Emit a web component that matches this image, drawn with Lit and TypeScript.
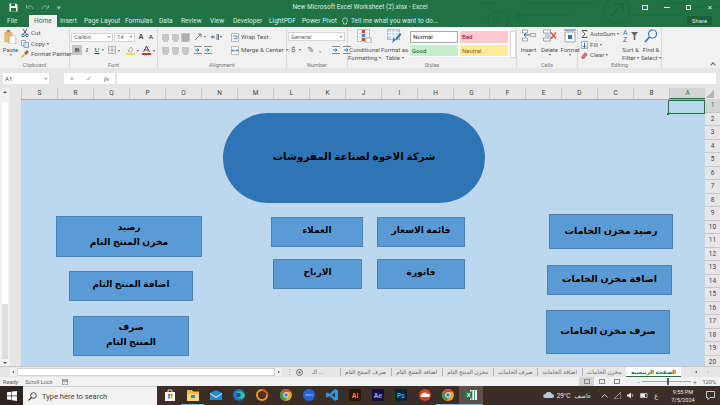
import { LitElement, html, css, nothing } from "lit";
import { customElement } from "lit/decorators.js";

interface Shape {
  x: number;
  y: number;
  w: number;
  h: number;
  size: number;
  lines: string[];
  pill?: boolean;
}

// page coordinates, sheet starts at 21,99
const SHAPES: Shape[] = [
  { x: 223, y: 112, w: 262, h: 90, size: 10.3, lines: ["شركة الاخوة لصناعة المفروشات"], pill: true },
  { x: 56, y: 215, w: 146, h: 41, size: 9.2, lines: ["رصيد", "مخزن المنتج التام"] },
  { x: 69, y: 270, w: 124, h: 30, size: 8.9, lines: ["اضافة المنتج التام"] },
  { x: 73, y: 315, w: 116, h: 40, size: 9.2, lines: ["صرف", "المنتج التام"] },
  { x: 271, y: 216, w: 92, h: 30, size: 9, lines: ["العملاء"] },
  { x: 377, y: 216, w: 88, h: 30, size: 9, lines: ["قائمة الاسعار"] },
  { x: 273, y: 258, w: 89, h: 30, size: 9, lines: ["الارباح"] },
  { x: 377, y: 258, w: 88, h: 30, size: 9, lines: ["فاتورة"] },
  { x: 549, y: 213, w: 124, h: 35, size: 9.6, lines: ["رصيد مخزن الخامات"] },
  { x: 547, y: 264, w: 125, h: 30, size: 9.4, lines: ["اضافة مخزن الخامات"] },
  { x: 546, y: 309, w: 124, h: 44, size: 9.6, lines: ["صرف مخزن الخامات"] },
];

const COLUMNS = "SRQPONMLKJIHGFEDCBA".split("");
const ROWS = Array.from({ length: 20 }, (_, i) => i + 1);

const TABS: [string, number][] = [
  ["File", 7],
  ["Home", 29],
  ["Insert", 60],
  ["Page Layout", 84],
  ["Formulas", 125],
  ["Data", 159],
  ["Review", 181],
  ["View", 210],
  ["Developer", 233],
  ["LightPDF", 269],
  ["Power Pivot", 302],
];

const SHEET_TABS = [
  "صرف المنتج التام",
  "اضافة المنتج التام",
  "مخزن المنتج التام",
  "صرف الخامات",
  "اضافة الخامات",
  "مخزن الخامات",
];

const caret = html`<i class="caret"></i>`;

const ICONS = {
  save: html`<svg width="9" height="9" viewBox="0 0 9 9"><path d="M.5.5h6.5l1.500 1.500v6.500h-8z" fill="#fff"/><path d="M2 .5h4v2.500H2zM2 5h5v3.500H2z" fill="#217346"/></svg>`,
  undo: html`<svg width="9" height="8" viewBox="0 0 9 8"><path d="M2 3.500c2-2.500 5-2 6 1.500M1.500 1v3h3" fill="none" stroke="#7fb093"/></svg>`,
  redo: html`<svg width="9" height="8" viewBox="0 0 9 8"><path d="M7 3.500c-2-2.500-5-2-6 1.500M7.500 1v3h-3" fill="none" stroke="#7fb093"/></svg>`,
  paste: html`<svg width="15" height="17" viewBox="0 0 15 17"><path d="M0 2h10v13H0z" fill="#e6bd6c"/><path d="M3 0h4v3H3z" fill="#8d8d8d"/><path d="M6 7h6l2 2v8H6z" fill="#fff" stroke="#8a8a8a" stroke-width=".7"/></svg>`,
  cut: html`<svg width="8" height="8" viewBox="0 0 8 8"><path d="M2 0l3.500 5M6 0L2.500 5" stroke="#5a5a5a" fill="none"/><circle cx="2" cy="6.300" r="1.300" fill="none" stroke="#2a73b8"/><circle cx="6" cy="6.300" r="1.300" fill="none" stroke="#2a73b8"/></svg>`,
  copy: html`<svg width="8" height="8" viewBox="0 0 8 8"><path d="M.5.5h4v5h-4z" fill="#fff" stroke="#8a8a8a" stroke-width=".7"/><path d="M3 2.500h4.500v5H3z" fill="#d8e6f2" stroke="#5b8fbe" stroke-width=".7"/></svg>`,
  painter: html`<svg width="8" height="8" viewBox="0 0 8 8"><path d="M0 7l3-3 1 1-3 3z" fill="#e0a030"/><path d="M3 3l3-3 2 2-3 3z" fill="#9a6e3a"/></svg>`,
  alignLines: (selected = false) =>
    html`<svg class=${selected ? "on" : ""} width="9" height="9" viewBox="0 0 9 9"><path d="M1 2h7M1 4h7M1 6h7M2 8h5" stroke="#8b8b8b" stroke-width=".8"/></svg>`,
  indent: html`<svg width="8" height="8" viewBox="0 0 8 8"><path d="M0 .5h8M0 7.500h8" stroke="#8b8b8b"/><path d="M1 4h4M3.500 2.500L5 4 3.500 5.500" fill="none" stroke="#2a73b8"/></svg>`,
  wrap: html`<svg width="8" height="9" viewBox="0 0 8 9"><path d="M.5.5h7v8h-7z" fill="#fff" stroke="#9a9a9a" stroke-width=".7"/><path d="M2 3h4v2.500H3" fill="none" stroke="#2a73b8" stroke-width=".8"/></svg>`,
  merge: html`<svg width="8" height="9" viewBox="0 0 8 9"><path d="M.5.5h7v8h-7z" fill="#fff" stroke="#9a9a9a" stroke-width=".7"/><path d="M1 4.500h6M2.500 3L1 4.500 2.500 6M5.500 3L7 4.500 5.500 6" fill="none" stroke="#2a73b8" stroke-width=".7"/></svg>`,
  conditional: html`<svg width="15" height="14" viewBox="0 0 15 14"><path d="M.5.5h12v12H.5z" fill="#fff" stroke="#aaa" stroke-width=".7"/><path d="M4.500.5v12M8.500.5v12M.5 4.500h12M.5 8.500h12" stroke="#bbb" stroke-width=".5"/><path d="M5 1h3v3H5z" fill="#d8453a"/><path d="M5 5h3v3H5z" fill="#3f87c8"/><path d="M5 9h3v3H5z" fill="#d8453a"/><path d="M9 9h5v5H9z" fill="#fff" stroke="#777" stroke-width=".6"/></svg>`,
  table: html`<svg width="15" height="14" viewBox="0 0 15 14"><path d="M.5.5h12v10H.5z" fill="#cfe0f0" stroke="#8aa9c6" stroke-width=".7"/><path d="M.5 3.500h12M.5 6.500h12M4.500.5v10M8.500.5v10" stroke="#fff" stroke-width=".7"/><path d="M5 14l1.500-5 2 2zM8 10l5-6 1.500 1.500-5.500 6z" fill="#3a78b4"/></svg>`,
  insert: html`<svg width="14" height="13" viewBox="0 0 14 13"><path d="M.5.5h5v3h-5zM.5 8.500h5v3h-5zM8.500 4h5v3h-5z" fill="#fff" stroke="#7f7f7f" stroke-width=".7"/><path d="M8 5.500H2M4 3.800L2 5.500l2 1.700" fill="none" stroke="#2a73b8"/></svg>`,
  remove: html`<svg width="14" height="13" viewBox="0 0 14 13"><path d="M.5.5h7v3h-7zM.5 8.500h7v3h-7z" fill="#fff" stroke="#7f7f7f" stroke-width=".7"/><path d="M2 4h6v4H2z" fill="#b9d2ea"/><path d="M8 3l5 6M13 3L8 9" stroke="#d8453a" stroke-width="1.200"/></svg>`,
  format: html`<svg width="14" height="14" viewBox="0 0 14 14"><path d="M2 3h10v10H2z" fill="#fff" stroke="#7f7f7f" stroke-width=".7"/><path d="M5 6h4v4H5z" fill="#2a73b8"/><path d="M1 1h12" stroke="#2a73b8"/></svg>`,
  sum: html`<svg width="7" height="8" viewBox="0 0 7 8"><path d="M6 1.500V.5H1l3 3.500-3 3.500h5V6.500" fill="none" stroke="#555"/></svg>`,
  fill: html`<svg width="7" height="8" viewBox="0 0 7 8"><path d="M.5.5h6v7h-6z" fill="#fff" stroke="#8a8a8a" stroke-width=".7"/><path d="M3.500 1.500v5M2 5l1.500 1.500L5 5" fill="none" stroke="#2a73b8"/></svg>`,
  clear: html`<svg width="7" height="7" viewBox="0 0 7 7"><path d="M0 5l4-5 3 2.500L3 7H1z" fill="#d8707a"/></svg>`,
  sort: html`<svg width="15" height="14" viewBox="0 0 15 14"><path d="M8 3h7l-2.700 3.500V11h-1.600V6.500z" fill="#666"/><text x="0" y="6" font-size="6.500" fill="#2a73b8" font-family="Liberation Sans">A</text><text x="0" y="13" font-size="6.500" fill="#555" font-family="Liberation Sans">Z</text></svg>`,
  find: html`<svg width="14" height="14" viewBox="0 0 14 14"><circle cx="8.500" cy="5" r="4" fill="#fff" stroke="#2a73b8" stroke-width="1.200"/><path d="M5.500 8L1 13" stroke="#2a73b8" stroke-width="1.600"/></svg>`,
  windows: html`<svg width="10" height="10" viewBox="0 0 10 10"><path d="M0 1.300L4.400.7v3.900H0zM5 .6L10 0v4.600H5zM0 5.200h4.400v3.900L0 8.500zM5 5.200h5V10l-5-.7z" fill="#fff"/></svg>`,
  search: html`<svg width="9" height="9" viewBox="0 0 9 9"><circle cx="5.500" cy="3.500" r="2.800" fill="none" stroke="#333" stroke-width=".9"/><path d="M3.500 5.500L.5 8.500" stroke="#333" stroke-width="1.100"/></svg>`,
};

const app = (bg: string, label: string, fg: string) =>
  html`<svg width="12" height="12" viewBox="0 0 12 12"><rect width="12" height="12" rx="1" fill=${bg}/><text x="6" y="8.500" font-size="6.500" font-weight="700" text-anchor="middle" font-family="Liberation Sans" fill=${fg}>${label}</text></svg>`;

const chrome = (badge = false) =>
  html`<svg width="12" height="12" viewBox="0 0 12 12"><circle cx="6" cy="6" r="6" fill="#e0a82e"/><path d="M6 0a6 6 0 0 1 5.200 3H6A3 3 0 0 0 3.300 4.800L1.500 2A6 6 0 0 1 6 0z" fill="#d8453a"/><path d="M1.500 2A6 6 0 0 0 4.500 11.800L7 8.800A3 3 0 0 1 3.300 4.800z" fill="#3f9a4f"/><circle cx="6" cy="6" r="2.300" fill="#3f87d8" stroke="#fff" stroke-width=".7"/>${badge
      ? html`<circle cx="9.500" cy="9.500" r="2.500" fill="#777"/>`
      : nothing}</svg>`;

const TASKBAR = [
  { icon: html`<svg width="12" height="12" viewBox="0 0 12 12"><path d="M1 3h10v9H1z" fill="#f4f4f4"/><path d="M4 3V1h4v2" fill="none" stroke="#ddd"/><path d="M4 5h2v2H4z" fill="#e4572e"/><path d="M6.500 5h2v2h-2z" fill="#7db343"/><path d="M4 7.500h2v2H4z" fill="#2a8bd8"/><path d="M6.500 7.500h2v2h-2z" fill="#f2b91c"/></svg>` },
  { icon: html`<svg width="12" height="11" viewBox="0 0 12 11"><path d="M0 0h5l1 1.500h6V11H0z" fill="#e9b949"/><path d="M0 4h12v7H0z" fill="#f6d77d"/><path d="M4 5h4v3H4z" fill="#3f87c8"/></svg>`, on: true },
  { icon: html`<svg width="12" height="10" viewBox="0 0 12 10"><path d="M0 3l6-3 6 3v7H0z" fill="#1f8ad2"/><path d="M0 3l6 3.500L12 3v1.200L6 8 0 4.200z" fill="#bfe2f7"/></svg>` },
  { icon: html`<svg width="12" height="12" viewBox="0 0 12 12"><circle cx="6" cy="6" r="6" fill="#1a73c4"/><path d="M12 7c-.5-4-4.500-5.500-7-4.500C3 3.500 2.500 6 4 8s6 2.500 8-1z" fill="#2fc1a8"/><circle cx="5.500" cy="6" r="2.200" fill="#0c4f94"/></svg>` },
  { icon: html`<svg width="12" height="12" viewBox="0 0 12 12"><circle cx="6" cy="6" r="5" fill="none" stroke="#f29f1f" stroke-width="2"/><path d="M6 1a5 5 0 0 1 5 5" fill="none" stroke="#e4472e" stroke-width="2"/><circle cx="6" cy="6" r="3" fill="#55321f"/></svg>` },
  { icon: chrome() },
  { icon: html`<svg width="12" height="12" viewBox="0 0 12 12"><circle cx="6" cy="6" r="6" fill="#2563e0"/><path d="M2.500 6h7" stroke="#fff" stroke-dasharray="1 .6"/></svg>` },
  { icon: html`<svg width="12" height="12" viewBox="0 0 12 12"><path d="M9 0l3 1.500v9L9 12 3.500 7 1.500 8.500 0 7.700V4.300l1.500-.8 2 1.500zM9 3.500L5.500 6 9 8.500z" fill="#2a9ae6"/></svg>` },
  { icon: app("#2b1600", "Ai", "#f59a23") },
  { icon: app("#10103a", "Ae", "#a8a8ff") },
  { icon: app("#0a2238", "Ps", "#31a8ff") },
  { icon: html`<svg width="12" height="12" viewBox="0 0 12 12"><circle cx="6" cy="6" r="6" fill="#d8431f"/><path d="M2 8a1.500 1.500 0 0 1 .8-2.500A3.200 3.200 0 0 1 8.500 5 1.600 1.600 0 0 1 10 8z" fill="#fff"/></svg>` },
  { icon: chrome(true), on: true },
  { icon: html`<svg width="12" height="12" viewBox="0 0 12 12"><path d="M5 1h7v10H5z" fill="#fff"/><path d="M7 1v10M9.500 1v10" stroke="#1f7a48" stroke-width=".8"/><path d="M0 2.500h7v7H0z" fill="#1f7a48"/><text x="3.500" y="8" font-size="5.500" font-weight="700" text-anchor="middle" font-family="Liberation Sans" fill="#fff">X</text></svg>`, on: true, active: true },
];

@customElement("app-root")
export class AppRoot extends LitElement {
  static styles = css`
    :host {
      display: flex;
      flex-direction: column;
      width: 720px;
      height: 405px;
      overflow: hidden;
      font-family: Roboto, "Liberation Sans", sans-serif;
      font-size: 6px;
      color: #444;
      background: #e6e6e6;
    }

    /* title bar + tabs */
    .head {
      position: relative;
      height: 27px;
      background: #217346;
      color: #fff;
      flex: none;
    }
    .decor {
      position: absolute;
      left: 480px;
      top: 0;
    }
    .qat {
      position: absolute;
      left: 9px;
      top: 3px;
      display: flex;
      align-items: center;
      gap: 7px;
    }
    .title {
      position: absolute;
      left: 0;
      right: 0;
      top: 3px;
      text-align: center;
      font-size: 6.500px;
      line-height: 9px;
      color: #dcebe3;
    }
    .win {
      position: absolute;
      top: 3px;
      left: 634px;
      display: flex;
      align-items: center;
      height: 9px;
    }
    .win div {
      width: 21.700px;
      display: flex;
      justify-content: center;
      align-items: center;
      font-size: 8px;
      line-height: 8px;
      color: #dcebe3;
    }
    .win i {
      display: block;
      width: 6px;
      height: 5px;
      border: 1px solid #dcebe3;
      box-sizing: border-box;
    }
    .win i.min {
      height: 1px;
      border-width: 1px 0 0;
    }
    .win i.max {
      width: 5px;
    }
    .tab {
      position: absolute;
      top: 15px;
      height: 12px;
      line-height: 12px;
      font-size: 6.600px;
      color: #dcebe3;
      white-space: nowrap;
    }
    .tab.home {
      background: #f1f1f1;
      color: #217346;
      padding: 0 5px;
    }
    .tell {
      position: absolute;
      top: 15px;
      left: 342px;
      height: 12px;
      line-height: 12px;
      font-size: 6.600px;
      color: #dcebe3;
      display: flex;
      gap: 3px;
      align-items: center;
    }
    .share {
      position: absolute;
      left: 687px;
      top: 16px;
      width: 25px;
      height: 9px;
      line-height: 9px;
      background: #1a5f39;
      font-size: 6px;
      text-align: center;
      color: #dcebe3;
    }

    /* ribbon */
    .ribbon {
      display: flex;
      height: 41px;
      background: #f1f1f1;
      flex: none;
      position: relative;
      color: #555;
    }
    .group {
      display: flex;
      flex-direction: column;
      flex: none;
      box-sizing: border-box;
      border-right: 1px solid #dadada;
      margin-top: 1px;
    }
    .group-body {
      flex: 1;
      display: flex;
      min-height: 0;
    }
    .group-name {
      height: 6px;
      line-height: 6px;
      text-align: center;
      font-size: 5.600px;
      color: #7a7a7a;
    }
    .caret {
      display: inline-block;
      width: 0;
      height: 0;
      border: 1.500px solid transparent;
      border-top: 2px solid #666;
      border-bottom: 0;
      vertical-align: middle;
    }
    .big {
      display: flex;
      flex-direction: column;
      align-items: center;
      font-size: 6px;
      line-height: 7.500px;
      text-align: center;
      white-space: nowrap;
      flex: none;
    }
    .big svg {
      margin-bottom: 3px;
      height: 14px;
    }
    .stack {
      display: flex;
      flex-direction: column;
      gap: 2.500px;
    }
    .line {
      display: flex;
      align-items: center;
      gap: 2px;
      height: 8px;
      font-size: 6.200px;
      white-space: nowrap;
    }
    .select {
      box-sizing: border-box;
      height: 9px;
      line-height: 8px;
      background: #fff;
      border: 0.5px solid #d6d6d6;
      padding: 0 2px;
      font-size: 6px;
      display: flex;
      justify-content: space-between;
      align-items: center;
      color: #666;
    }
    .icon-row {
      display: flex;
      align-items: center;
      height: 10px;
    }
    .glyph {
      width: 10px;
      text-align: center;
      font-size: 7px;
      line-height: 10px;
      font-family: "Liberation Serif", serif;
      color: #444;
      flex: none;
    }
    .glyph.on {
      background: #c6c6c6;
    }
    .glyph.sans {
      font-family: "Liberation Sans", sans-serif;
      font-weight: 700;
    }
    svg.on {
      background: #c6c6c6;
    }
    .gallery {
      display: grid;
      grid-template-columns: 48px 48px;
      gap: 2px;
      margin-left: 1px;
      align-self: start;
      background: #fff;
      padding: 1px;
      height: 25px;
      box-sizing: content-box;
    }
    .style {
      font-size: 6px;
      line-height: 11px;
      height: 11.500px;
      padding-left: 2px;
      box-sizing: border-box;
    }
    .style.normal {
      background: #fff;
      border: 1px solid #a6a6a6;
      color: #222;
      line-height: 9.500px;
    }
    .style.bad {
      background: #ffc7ce;
      color: #9c0006;
    }
    .style.good {
      background: #c6efce;
      color: #006100;
    }
    .style.neutral {
      background: #ffeb9c;
      color: #9c5700;
    }
    .scroller {
      width: 6px;
      height: 27px;
      margin-left: 1px;
      background: #fff;
      border: 0.5px solid #d6d6d6;
      box-sizing: border-box;
    }
    .collapse {
      position: absolute;
      left: 711px;
      top: 36px;
      width: 3px;
      height: 3px;
      border-left: 1px solid #666;
      border-top: 1px solid #666;
      transform: rotate(45deg);
    }

    /* formula bar */
    .formula {
      display: flex;
      align-items: flex-start;
      height: 20px;
      padding: 5px 4px 0 3px;
      box-sizing: border-box;
      flex: none;
      background: #e6e6e6;
    }
    .name-box {
      box-sizing: border-box;
      width: 46px;
      height: 11px;
      background: #fff;
      line-height: 11px;
      padding: 0 2px;
      font-size: 6px;
      display: flex;
      justify-content: space-between;
      align-items: center;
    }
    .fx-box {
      width: 51px;
      height: 11px;
      margin-left: 15px;
      background: #fff;
      display: flex;
      justify-content: space-around;
      align-items: center;
      color: #9a9a9a;
      font-size: 7px;
    }
    .fx-box em {
      font-family: "Liberation Serif", serif;
      color: #555;
    }
    .input {
      flex: 1;
      height: 11px;
      margin-left: 2px;
      background: #fff;
    }

    /* grid */
    .sheet-area {
      flex: none;
      display: grid;
      grid-template-columns: 21px 684px 15px;
      grid-template-rows: 11px 267px;
    }
    .vscroll {
      grid-row: 1 / span 2;
      display: flex;
      background: #e6e6e6;
    }
    .vtrack {
      width: 10px;
      background: #f1f1f1;
      display: flex;
      flex-direction: column;
      align-items: center;
      box-sizing: border-box;
      padding: 2px 2px 1px;
    }
    .vthumb {
      width: 6px;
      height: 202px;
      margin-top: 8px;
      background: #fff;
      flex: none;
    }
    .vrest {
      flex: 1;
      width: 6px;
      background: #dedede;
    }
    .tri-up,
    .tri-down {
      flex: none;
      width: 0;
      height: 0;
      border: 2px solid transparent;
      margin: 1px 0;
    }
    .tri-up {
      border-bottom: 2px solid #555;
      border-top: 0;
    }
    .tri-down {
      border-top: 2px solid #555;
      border-bottom: 0;
      margin-top: 3px;
    }
    .cols {
      display: flex;
    }
    .col {
      width: 36px;
      flex: none;
      box-sizing: border-box;
      text-align: center;
      line-height: 11px;
      font-size: 6.500px;
      border-left: 0.5px solid #c8c8c8;
      color: #444;
    }
    .col.on {
      background: #d4d4d4;
      color: #217346;
      border-bottom: 1px solid #217346;
    }
    .corner {
      width: 0;
      height: 0;
      border-style: solid;
      border-width: 0 0 8px 8px;
      border-color: transparent transparent #b5b5b5 transparent;
      margin: 2px 0 0 1px;
    }
    .sheet {
      position: relative;
      background: #bdd7ee;
      overflow: hidden;
      border-top: 0.5px solid #a9a9a9;
      box-sizing: border-box;
    }
    .shape {
      position: absolute;
      box-sizing: border-box;
      display: flex;
      flex-direction: column;
      align-items: center;
      justify-content: center;
      padding-bottom: 3px;
      background: #5b9bd5;
      border: 1px solid #4a82b6;
      color: #000;
      font-family: "Liberation Sans", "DejaVu Sans", sans-serif;
      font-weight: 700;
      line-height: 15px;
      direction: rtl;
      white-space: nowrap;
    }
    .shape.pill {
      background: #2e75b6;
      border: 0;
      border-radius: 45px;
    }
    .cell {
      position: absolute;
      left: 647px;
      top: 0;
      width: 37px;
      height: 14px;
      box-sizing: border-box;
      border: 1px solid #217346;
    }
    .cell::after {
      content: "";
      position: absolute;
      left: -2px;
      bottom: -2px;
      width: 2px;
      height: 2px;
      background: #217346;
    }
    .rows {
      display: flex;
      flex-direction: column;
      overflow: hidden;
    }
    .row {
      height: 13.500px;
      line-height: 13.500px;
      flex: none;
      text-align: center;
      font-size: 6.500px;
      box-sizing: border-box;
      border-bottom: 0.5px solid #c8c8c8;
      color: #444;
    }
    .row.on {
      background: #d4d4d4;
      color: #217346;
    }

    /* sheet tabs */
    .tabs {
      display: flex;
      align-items: center;
      height: 11px;
      flex: none;
      background: #e6e6e6;
      padding-left: 10px;
      box-sizing: border-box;
      border-top: 0.5px solid #c8c8c8;
    }
    .hbar {
      width: 272px;
      height: 8px;
      flex: none;
      display: flex;
      align-items: center;
      background: #f1f1f1;
    }
    .hthumb {
      flex: 1;
      height: 6px;
      margin: 0 1px;
      background: #fff;
      border: 0.5px solid #d4d4d4;
    }
    .tri-l,
    .tri-r {
      width: 0;
      height: 0;
      border: 1.500px solid transparent;
      margin: 0 2px;
      flex: none;
    }
    .tri-l {
      border-right: 2px solid #444;
      border-left: 0;
    }
    .tri-r {
      border-left: 2px solid #444;
      border-right: 0;
    }
    .dots {
      width: 14px;
      flex: none;
      text-align: center;
      line-height: 8px;
      font-size: 7px;
      color: #999;
    }
    .plus {
      width: 7px;
      height: 7px;
      line-height: 6px;
      border: 0.7px solid #777;
      border-radius: 50%;
      text-align: center;
      font-size: 7px;
      flex: none;
      box-sizing: border-box;
    }
    .more {
      margin-left: 9px;
      width: 16px;
      flex: none;
      font-family: "Liberation Sans", "DejaVu Sans", sans-serif;
      font-size: 5.700px;
      color: #666;
      white-space: nowrap;
    }
    .sheet-tabs {
      flex: 1;
      min-width: 0;
      display: flex;
      direction: rtl;
      align-items: center;
      overflow: hidden;
      height: 100%;
      font-family: "Liberation Sans", "DejaVu Sans", sans-serif;
      font-size: 5.700px;
      color: #666;
      white-space: nowrap;
    }
    .sheet-tab {
      padding: 0 4.500px;
      border-left: 0.5px solid #b4b4b4;
      line-height: 8px;
      flex: none;
    }
    .sheet-tab.on {
      background: #fff;
      color: #217346;
      font-size: 5.500px;
      font-weight: 700;
      height: 100%;
      line-height: 10px;
      padding: 0 5px;
      border-bottom: 1px solid #217346;
      box-sizing: border-box;
      border-left: 0;
    }
    .tab-nav {
      width: 39px;
      flex: none;
      display: flex;
      justify-content: flex-end;
      gap: 6px;
      padding-right: 9px;
      box-sizing: border-box;
      align-items: center;
    }

    /* status */
    .status {
      display: flex;
      align-items: center;
      height: 9px;
      background: #f1f1f1;
      flex: none;
      padding-left: 3px;
      gap: 7px;
      font-size: 5.600px;
      color: #666;
    }
    .status .spacer {
      flex: 1;
    }
    .views {
      display: flex;
      align-items: center;
      height: 100%;
    }
    .view {
      width: 15px;
      height: 9px;
      display: flex;
      align-items: center;
      justify-content: center;
    }
    .view.on {
      background: #d4d4d4;
    }
    .view i {
      width: 6px;
      height: 5px;
      border: 0.7px solid #8a8a8a;
      box-sizing: border-box;
      display: block;
    }
    .zoom {
      display: flex;
      align-items: center;
      gap: 2px;
      padding: 0 4px 0 3px;
      margin-left: 3px;
    }
    .slider {
      position: relative;
      width: 49px;
      height: 1px;
      background: #a6a6a6;
    }
    .slider b {
      position: absolute;
      left: 25px;
      top: -3px;
      width: 1.500px;
      height: 7px;
      background: #555;
    }

    /* taskbar */
    .taskbar {
      flex: 1;
      display: flex;
      background: #3a2e26;
      color: #f0ece8;
    }
    .start {
      width: 23px;
      display: flex;
      align-items: center;
      justify-content: center;
      flex: none;
      background: #2c241e;
    }
    .search {
      width: 134px;
      flex: none;
      display: flex;
      align-items: center;
      gap: 5px;
      padding-left: 5px;
      box-sizing: border-box;
      background: #f2f2f2;
      color: #444;
      font-size: 7.500px;
      border-top: 1px solid #d0d0d0;
    }
    .apps {
      display: flex;
      margin-left: 1px;
    }
    .app {
      width: 23.200px;
      display: flex;
      align-items: center;
      justify-content: center;
      box-sizing: border-box;
      border-bottom: 1px solid transparent;
    }
    .app.on {
      border-bottom-color: #76b9ed;
    }
    .app.active {
      background: #5c5048;
    }
    .tray {
      flex: 1;
      display: flex;
      align-items: center;
      font-size: 6px;
      padding-left: 60px;
      white-space: nowrap;
    }
    .tray span,
    .tray svg {
      flex: none;
    }
    .temp {
      margin-left: 3px;
      font-size: 6.500px;
    }
    .wind {
      margin-left: 4px;
      font-family: "Liberation Sans", "DejaVu Sans", sans-serif;
    }
    .tray-icons {
      display: flex;
      align-items: center;
      gap: 6px;
      margin-left: 10px;
    }
    .clock {
      margin-left: 13px;
      text-align: center;
      line-height: 8px;
      font-size: 5.600px;
    }
    .note {
      margin-left: 11px;
    }
  `;

  private _group(name: string, width: number, body: unknown) {
    return html`
      <div class="group" style="width:${width}px">
        <div class="group-body">${body}</div>
        <div class="group-name">${name}</div>
      </div>
    `;
  }

  private _clipboard() {
    return html`
      <div class="big" style="width:21px;padding-top:2px">
        ${ICONS.paste}
        <span style="margin-top:-1px">Paste</span>
        ${caret}
      </div>
      <div class="stack" style="padding-top:1px;gap:2.500px">
        <div class="line">${ICONS.cut}Cut</div>
        <div class="line">${ICONS.copy}Copy ${caret}</div>
        <div class="line">${ICONS.painter}Format Painter</div>
      </div>
    `;
  }

  private _font() {
    return html`
      <div class="stack" style="padding:4px 0 0 1px;gap:3px">
        <div class="icon-row">
          <div class="select" style="width:42px">Calibri ${caret}</div>
          <div class="select" style="width:21px;margin-left:1px">14 ${caret}</div>
          <span class="glyph sans" style="margin-left:1px;font-size:7px">A</span>
          <span class="glyph sans" style="font-size:6px">A</span>
        </div>
        <div class="icon-row" style="padding-left:1px">
          <span class="glyph on" style="font-weight:700">B</span>
          <span class="glyph" style="font-style:italic">I</span>
          <span class="glyph" style="text-decoration:underline">U</span>
          ${caret}
          <svg style="margin-left:4px" width="8" height="8" viewBox="0 0 8 8"><path d="M.5.5h7v7h-7zM4 .5v7M.5 4h7" fill="none" stroke="#9a9a9a" stroke-width=".7"/></svg>
          <span style="margin-left:2px">${caret}</span>
          <svg style="margin-left:6px" width="9" height="9" viewBox="0 0 9 9"><path d="M2 5l3-4 2 3-3 2z" fill="#fff" stroke="#777" stroke-width=".6"/><path d="M0 7h9v2H0z" fill="#ffd23f"/></svg>
          <span style="margin-left:2px">${caret}</span>
          <svg style="margin-left:3px" width="9" height="9" viewBox="0 0 9 9"><path d="M1.500 6L4.500 0 7.500 6M2.800 4h3.400" fill="none" stroke="#333" stroke-width=".9"/><path d="M0 7h9v2H0z" fill="#d8312a"/></svg>
          <span style="margin-left:2px">${caret}</span>
        </div>
      </div>
    `;
  }

  private _alignment() {
    return html`
      <div class="stack" style="padding:4px 0 0 3px;gap:3px">
        <div class="icon-row" style="gap:1px">
          ${ICONS.alignLines()} ${ICONS.alignLines()} ${ICONS.alignLines(true)}
          <svg style="margin-left:3px" width="9" height="8" viewBox="0 0 9 8"><path d="M1 7l6-6M4 1h3v3" fill="none" stroke="#777"/></svg>
          ${caret}
          <svg style="margin-left:4px" width="8" height="8" viewBox="0 0 8 8"><path d="M0 4h4M2 2.500L.5 4 2 5.500" fill="none" stroke="#2a73b8"/><path d="M6 1v6M7.500 1v6" stroke="#777"/></svg>
          ${caret}
        </div>
        <div class="icon-row" style="gap:1px">
          ${ICONS.alignLines()} ${ICONS.alignLines()} ${ICONS.alignLines()}
          <span style="margin-left:3px;display:flex;gap:2px">${ICONS.indent} ${ICONS.indent}</span>
        </div>
      </div>
      <div class="stack" style="padding:4px 0 0 9px;gap:3px">
        <div class="line" style="height:10px">${ICONS.wrap} Wrap Text</div>
        <div class="line" style="height:10px">${ICONS.merge} Merge &amp; Center ${caret}</div>
      </div>
    `;
  }

  private _number() {
    return html`
      <div class="stack" style="padding:4px 0 0 1px;gap:3px">
        <div class="select" style="width:57px">General ${caret}</div>
        <div class="icon-row" style="gap:3px;padding-left:3px;font-size:8px;height:11px;color:#555">
          <span>$</span> ${caret} <span style="margin-left:4px">%</span>
          <span style="margin-left:3px">,</span>
          <span style="margin-left:8px;display:flex;gap:3px">${ICONS.indent} ${ICONS.indent}</span>
        </div>
      </div>
    `;
  }

  private _styles() {
    return html`
      <div class="big" style="width:33px;padding-top:1px">
        ${ICONS.conditional}
        <span>Conditional</span>
        <span>Formatting ${caret}</span>
      </div>
      <div class="big" style="width:27px;padding-top:1px">
        ${ICONS.table}
        <span>Format as</span>
        <span>Table ${caret}</span>
      </div>
      <div class="gallery" style="padding-top:3px">
        <div class="style normal">Normal</div>
        <div class="style bad">Bad</div>
        <div class="style good">Good</div>
        <div class="style neutral">Neutral</div>
      </div>
      <div class="scroller" style="margin-top:3px"></div>
    `;
  }

  private _cells() {
    return html`
      <div style="display:flex;padding:1px 0 0 2px;gap:2px">
        <div class="big" style="width:19px">${ICONS.insert}<span>Insert</span>${caret}</div>
        <div class="big" style="width:19px">${ICONS.remove}<span>Delete</span>${caret}</div>
        <div class="big" style="width:18px">${ICONS.format}<span>Format</span>${caret}</div>
      </div>
    `;
  }

  private _editing() {
    return html`
      <div class="stack" style="padding:2px 0 0 3px;gap:2.500px;width:43px">
        <div class="line">${ICONS.sum} AutoSum ${caret}</div>
        <div class="line">${ICONS.fill} Fill ${caret}</div>
        <div class="line">${ICONS.clear} Clear ${caret}</div>
      </div>
      <div class="big" style="width:21px;padding-top:1px">
        ${ICONS.sort}
        <span>Sort &amp;</span>
        <span>Filter ${caret}</span>
      </div>
      <div class="big" style="width:20px;padding-top:1px">
        ${ICONS.find}
        <span>Find &amp;</span>
        <span>Select ${caret}</span>
      </div>
    `;
  }

  render() {
    return html`
      <div class="head">
        <svg class="decor" width="240" height="27" viewBox="0 0 240 27" fill="none" stroke="#1c6a3e" stroke-width="1">
          <circle cx="18" cy="21" r="10" />
          <path d="M14 25V17h8M14 17l8 8" />
          <path d="M38 15h50l6-6M38 15a2 2 0 1 1-.1 0M45 3h70M2 3h12" />
          <circle cx="137" cy="10" r="13" />
          <path d="M131 16l12-12M134 4h9v9" stroke-width="2" />
          <path d="M152 15h50l8-8h30M180 3h30" />
        </svg>
        <div class="qat">
          ${ICONS.save} ${ICONS.undo} ${ICONS.redo}
          <span style="font-size:7px;color:#9fc4af">▾</span>
        </div>
        <div class="title">New Microsoft Excel Worksheet (2).xlsx - Excel</div>
        <div class="win">
          <div><i></i></div>
          <div><i class="min"></i></div>
          <div><i class="max"></i></div>
          <div>×</div>
        </div>
        ${TABS.map(
          ([label, left]) => html`
            <div class="tab ${label === "Home" ? "home" : ""}" style="left:${left}px">${label}</div>
          `
        )}
        <div class="tell">
          <svg width="6" height="8" viewBox="0 0 6 8"><path d="M1.500 5.500a2.500 2.500 0 1 1 3 0V7h-3z" fill="none" stroke="#dcebe3" stroke-width=".7"/></svg>
          Tell me what you want to do...
        </div>
        <div class="share">Share</div>
      </div>

      <div class="ribbon">
        ${this._group("Clipboard", 70, this._clipboard())}
        ${this._group("Font", 88, this._font())}
        ${this._group("Alignment", 129, this._alignment())}
        ${this._group("Number", 61, this._number())}
        ${this._group("Styles", 169, this._styles())}
        ${this._group("Cells", 61, this._cells())}
        ${this._group("Editing", 84, this._editing())}
        <div class="collapse"></div>
      </div>

      <div class="formula">
        <div class="name-box">A1 ${caret}</div>
        <div class="fx-box"><span>×</span><span>✓</span><em>fx</em></div>
        <div class="input"></div>
      </div>

      <div class="sheet-area">
        <div class="vscroll">
          <div class="vtrack">
            <i class="tri-up"></i>
            <div class="vthumb"></div>
            <div class="vrest"></div>
            <i class="tri-down"></i>
          </div>
        </div>
        <div class="cols">
          ${COLUMNS.map((c) => html`<div class="col ${c === "A" ? "on" : ""}">${c}</div>`)}
        </div>
        <div class="corner"></div>
        <div class="sheet">
          ${SHAPES.map(
            (s) => html`
              <div
                class="shape ${s.pill ? "pill" : ""}"
                style="left:${s.x - 21}px;top:${s.y - 99}px;width:${s.w}px;height:${s.h}px;font-size:${s.size}px"
              >
                ${s.lines.map((l) => html`<div>${l}</div>`)}
              </div>
            `
          )}
          <div class="cell"></div>
        </div>
        <div class="rows">
          ${ROWS.map((r) => html`<div class="row ${r === 1 ? "on" : ""}">${r}</div>`)}
        </div>
      </div>

      <div class="tabs">
        <div class="hbar"><i class="tri-l"></i><div class="hthumb"></div><i class="tri-r"></i></div>
        <span class="dots">⋮</span>
        <div class="plus">+</div>
        <span class="more">الـ ...</span>
        <div class="sheet-tabs">
          <div class="sheet-tab on">الصفحة الرئيسية</div>
          ${[...SHEET_TABS].reverse().map((t) => html`<div class="sheet-tab">${t}</div>`)}
        </div>
        <div class="tab-nav"><i class="tri-l"></i><i class="tri-r" style="border-left-color:#bbb"></i></div>
      </div>

      <div class="status">
        <span>Ready</span>
        <span>Scroll Lock</span>
        <svg width="6" height="6" viewBox="0 0 6 6" style="margin-left:2px"><path d="M0 0h6v6H0z" fill="#e8e8e8" stroke="#666" stroke-width=".8"/><path d="M0 2h6" stroke="#666"/></svg>
        <span class="spacer"></span>
        <div class="views">
          <div class="view on"><i></i></div>
          <div class="view"><i></i></div>
          <div class="view"><i></i></div>
        </div>
        <div class="zoom">
          <span>−</span>
          <div class="slider"><b></b></div>
          <span>+</span>
          <span style="margin-left:4px">120%</span>
        </div>
      </div>

      <div class="taskbar">
        <div class="start">${ICONS.windows}</div>
        <div class="search">${ICONS.search} Type here to search</div>
        <div class="apps">
          ${TASKBAR.map(
            (a) => html`<div class="app ${a.on ? "on" : ""} ${a.active ? "active" : ""}">${a.icon}</div>`
          )}
        </div>
        <div class="tray">
          <svg width="11" height="7" viewBox="0 0 11 7"><path d="M2 6h7a2 2 0 0 0 0-4 3.500 3.500 0 0 0-6.500 0A2 2 0 0 0 2 6z" fill="#b8c8d6"/></svg>
          <span class="temp">29°C</span>
          <span class="wind">عاصف</span>
          <div class="tray-icons">
            <svg width="7" height="4" viewBox="0 0 7 4"><path d="M.5 3.500l3-3 3 3" fill="none" stroke="#eee" stroke-width=".8"/></svg>
            <svg width="7" height="7" viewBox="0 0 7 7"><path d="M0 7L7 0v7z" fill="none" stroke="#bbb" stroke-width=".8"/></svg>
            <svg width="7" height="7" viewBox="0 0 7 7"><path d="M0 2.500h1.500L4 .5v6L1.500 4.500H0z" fill="#eee"/><path d="M5 2a2 2 0 0 1 0 3" fill="none" stroke="#eee" stroke-width=".7"/></svg>
            <svg width="8" height="5" viewBox="0 0 8 5"><path d="M.5.500h6.500v4H.5z" fill="none" stroke="#eee" stroke-width=".7"/><path d="M1 1h4v3H1z" fill="#eee"/></svg>
            <span style="font-family:'DejaVu Sans',sans-serif;font-size:6.500px">ع</span>
          </div>
          <div class="clock">9:55 PM<br />7/5/2024</div>
          <svg class="note" width="9" height="9" viewBox="0 0 9 9"><path d="M.5.500h8v6H4L2 8.500v-2H.5z" fill="none" stroke="#eee" stroke-width=".8"/></svg>
        </div>
      </div>
    `;
  }
}

declare global {
  interface HTMLElementTagNameMap {
    "app-root": AppRoot;
  }
}
